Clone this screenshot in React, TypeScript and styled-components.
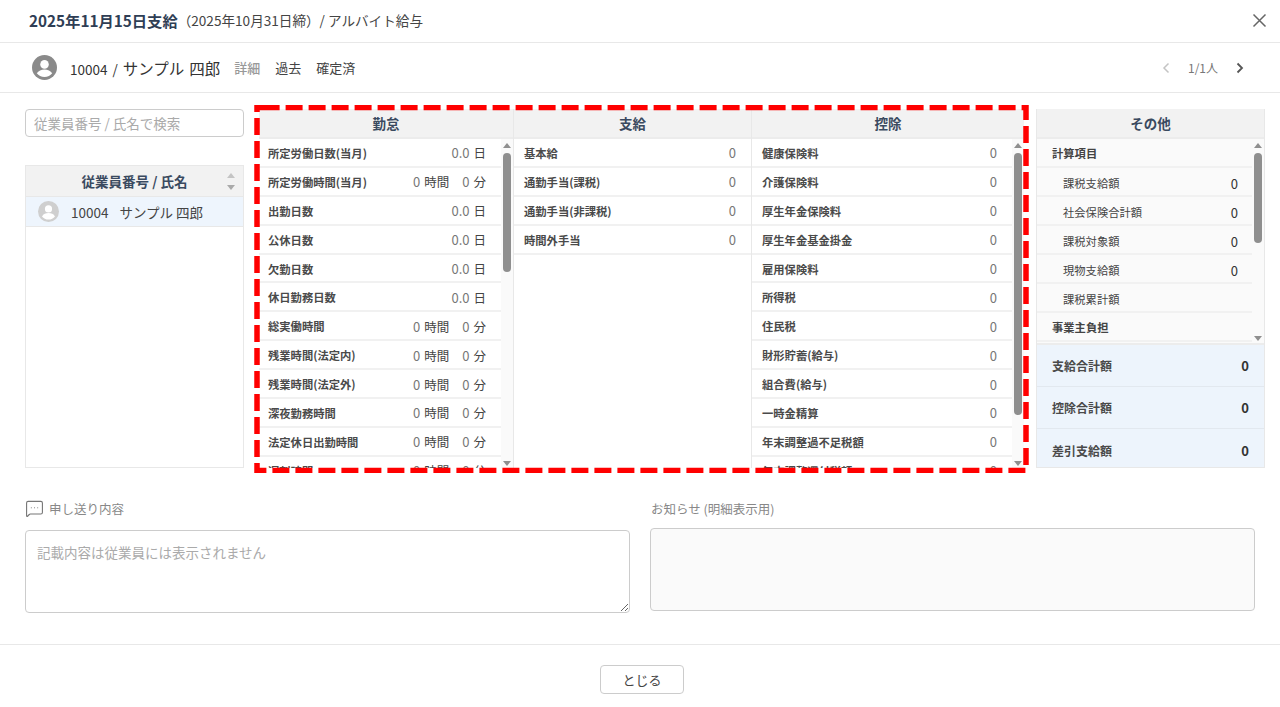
import React from "react";
import styled, { createGlobalStyle } from "styled-components";
import { MessageSquareMore } from "lucide-react";

const GlobalStyle = createGlobalStyle`
  html, body {
    margin: 0;
    padding: 0;
    background: #fff;
  }
  body {
    font-family: "Noto Sans CJK JP", "Noto Sans", sans-serif;
    color: #444;
  }
  * {
    box-sizing: border-box;
  }
`;

interface PayRow {
  label: string;
  days?: string;
  hours?: boolean;
  amount?: string;
}

const attendance: PayRow[] = [
  { label: "所定労働日数(当月)", days: "0.0" },
  { label: "所定労働時間(当月)", hours: true },
  { label: "出勤日数", days: "0.0" },
  { label: "公休日数", days: "0.0" },
  { label: "欠勤日数", days: "0.0" },
  { label: "休日勤務日数", days: "0.0" },
  { label: "総実働時間", hours: true },
  { label: "残業時間(法定内)", hours: true },
  { label: "残業時間(法定外)", hours: true },
  { label: "深夜勤務時間", hours: true },
  { label: "法定休日出勤時間", hours: true },
  { label: "遅刻時間", hours: true },
];

const payments: PayRow[] = [
  { label: "基本給", amount: "0" },
  { label: "通勤手当(課税)", amount: "0" },
  { label: "通勤手当(非課税)", amount: "0" },
  { label: "時間外手当", amount: "0" },
];

const deductions: PayRow[] = [
  { label: "健康保険料", amount: "0" },
  { label: "介護保険料", amount: "0" },
  { label: "厚生年金保険料", amount: "0" },
  { label: "厚生年金基金掛金", amount: "0" },
  { label: "雇用保険料", amount: "0" },
  { label: "所得税", amount: "0" },
  { label: "住民税", amount: "0" },
  { label: "財形貯蓄(給与)", amount: "0" },
  { label: "組合費(給与)", amount: "0" },
  { label: "一時金精算", amount: "0" },
  { label: "年末調整過不足税額", amount: "0" },
  { label: "年末調整還付税額", amount: "0" },
];

const others = [
  { label: "計算項目", heading: true },
  { label: "課税支給額", amount: "0" },
  { label: "社会保険合計額", amount: "0" },
  { label: "課税対象額", amount: "0" },
  { label: "現物支給額", amount: "0" },
  { label: "課税累計額" },
  { label: "事業主負担", heading: true },
];

const totals = ["支給合計額", "控除合計額", "差引支給額"];

const Avatar: React.FC<{ size: number; color: string }> = ({ size, color }) => (
  <svg width={size} height={size} viewBox="0 0 24 24" style={{ flexShrink: 0 }}>
    <circle cx="12" cy="12" r="12" fill={color} />
    <circle cx="12" cy="9" r="4.1" fill="#fff" />
    <path d="M4.6 17.6c1.5-2.6 4.4-3.8 7.4-3.8s5.900 1.200 7.400 3.800c-1.700 2.200-4.400 3.600-7.400 3.600s-5.700-1.400-7.400-3.600z" fill="#fff" />
  </svg>
);

const Rail: React.FC<{ thumb: number }> = ({ thumb }) => (
  <ScrollRail>
    <ArrowUp />
    <Thumb $height={thumb} />
    <RailSpacer />
    <ArrowDown />
  </ScrollRail>
);

const Rows: React.FC<{ rows: PayRow[]; inset: number }> = ({ rows, inset }) => (
  <RowList>
    {rows.map((row) => (
      <Row key={row.label} $inset={inset}>
        <RowLabel>{row.label}</RowLabel>
        {row.days && (
          <RowValue>
            <Num>{row.days}</Num>
            <Unit>日</Unit>
          </RowValue>
        )}
        {row.hours && (
          <RowValue>
            <Num>0</Num>
            <Unit>時間</Unit>
            <Num $gap>0</Num>
            <Unit>分</Unit>
          </RowValue>
        )}
        {row.amount && (
          <RowValue>
            <Num>{row.amount}</Num>
          </RowValue>
        )}
      </Row>
    ))}
  </RowList>
);

const App: React.FC = () => {
  return (
    <Page>
      <GlobalStyle />
      <TitleBar>
        <Title>2025年11月15日支給</Title>
        <SubTitle>（2025年10月31日締）/ アルバイト給与</SubTitle>
        <CloseIcon width="15" height="15" viewBox="0 0 15 15">
          <path d="M1.500 1.500l12 12M13.500 1.500l-12 12" stroke="#666" strokeWidth="1.500" fill="none" />
        </CloseIcon>
      </TitleBar>

      <EmployeeBar>
        <Avatar size={25} color="#8a8a8a" />
        <EmployeeName>
          <EmployeeCode>10004 /</EmployeeCode> サンプル 四郎
        </EmployeeName>
        <Tab $active>詳細</Tab>
        <Tab>過去</Tab>
        <Tab>確定済</Tab>
        <Pager>
          <svg width="9" height="12" viewBox="0 0 9 12">
            <path d="M6.500 1.500L2 6l4.500 4.500" stroke="#c4c4c4" strokeWidth="1.500" fill="none" />
          </svg>
          <PagerText>1/1人</PagerText>
          <svg width="9" height="12" viewBox="0 0 9 12">
            <path d="M2.500 1.500L7 6l-4.500 4.500" stroke="#555" strokeWidth="1.800" fill="none" />
          </svg>
        </Pager>
      </EmployeeBar>

      <Body>
        <Sidebar>
          <SearchInput placeholder="従業員番号 / 氏名で検索" />
          <EmployeeTable>
            <EmployeeHead>
              従業員番号 / 氏名
              <SortIcon>
                <ArrowUp $color="#c4c4c4" />
                <ArrowDown $color="#aaa" />
              </SortIcon>
            </EmployeeHead>
            <EmployeeRow>
              <Avatar size={21} color="#cfcfcf" />
              <span>10004</span>
              <span>サンプル 四郎</span>
            </EmployeeRow>
          </EmployeeTable>
        </Sidebar>

        <PayPanel>
          <PayColumn>
            <PanelHead>勤怠</PanelHead>
            <ColumnBody>
              <Rows rows={attendance} inset={9} />
              <Rail thumb={119} />
            </ColumnBody>
          </PayColumn>
          <PayColumn>
            <PanelHead>支給</PanelHead>
            <ColumnBody>
              <Rows rows={payments} inset={10} />
            </ColumnBody>
          </PayColumn>
          <PayColumn>
            <PanelHead>控除</PanelHead>
            <ColumnBody>
              <Rows rows={deductions} inset={10} />
              <Rail thumb={262} />
            </ColumnBody>
          </PayColumn>
          <Highlight width="775" height="368" viewBox="0 0 775 368">
            <path
              d="M8.600 2.500H772V365.500H3V2.500H8.600"
              fill="none"
              stroke="#f00"
              strokeWidth="5.500"
              strokeDasharray="17 6"
            />
          </Highlight>
        </PayPanel>

        <OtherPanel>
          <PanelHead>その他</PanelHead>
          <OtherScroll>
            <OtherList>
              {others.map((item) => (
                <OtherRow key={item.label} $heading={item.heading}>
                  <span>{item.label}</span>
                  {item.amount && <OtherValue>{item.amount}</OtherValue>}
                </OtherRow>
              ))}
            </OtherList>
            <Rail thumb={90} />
          </OtherScroll>
          <Totals>
            {totals.map((label) => (
              <TotalRow key={label}>
                <span>{label}</span>
                <TotalValue>0</TotalValue>
              </TotalRow>
            ))}
          </Totals>
        </OtherPanel>
      </Body>

      <Notes>
        <NoteBlock>
          <NoteLabel>
            <MessageSquareMore size={19} strokeWidth={1.400} color="#777" />
            申し送り内容
          </NoteLabel>
          <NoteArea placeholder="記載内容は従業員には表示されません" />
        </NoteBlock>
        <NoteBlock>
          <NoteLabel $plain>お知らせ (明細表示用)</NoteLabel>
          <NoteArea $readonly />
        </NoteBlock>
      </Notes>

      <Footer>
        <CloseButton>とじる</CloseButton>
      </Footer>
    </Page>
  );
};

const Page = styled.div`
  width: 1280px;
  height: 707px;
  display: flex;
  flex-direction: column;
  overflow: hidden;
`;

const TitleBar = styled.div`
  height: 43px;
  flex-shrink: 0;
  display: flex;
  align-items: center;
  padding: 0 13px 2px 29px;
  border-bottom: 1px solid #e8e8e8;
`;

const Title = styled.span`
  font-size: 15.3px;
  font-weight: 700;
  color: #2f3e55;
`;

const SubTitle = styled.span`
  font-size: 13.6px;
  color: #444;
`;

const CloseIcon = styled.svg`
  margin-left: auto;
`;

const EmployeeBar = styled.div`
  height: 50px;
  flex-shrink: 0;
  display: flex;
  align-items: center;
  padding: 0 36px 0 32px;
  border-bottom: 1px solid #e8e8e8;
`;

const EmployeeName = styled.span`
  font-size: 15.5px;
  word-spacing: 1.500px;
  color: #333;
  margin: 0 14px 0 13px;
  white-space: pre-wrap;
`;

const EmployeeCode = styled.span`
  font-size: 13.5px;
  word-spacing: 2px;
`;

const Tab = styled.span<{ $active?: boolean }>`
  font-size: 13px;
  margin-right: 15px;
  color: ${(props) => (props.$active ? "#999" : "#444")};
  font-weight: ${(props) => (props.$active ? 500 : 400)};
`;

const Pager = styled.div`
  margin-left: auto;
  display: flex;
  align-items: center;
  gap: 17px;
`;

const PagerText = styled.span`
  font-size: 12px;
  color: #777;
`;

const Body = styled.div`
  height: 375px;
  flex-shrink: 0;
  display: flex;
  padding: 16px 15px 0 25px;
`;

const Sidebar = styled.div`
  width: 219px;
  height: 359px;
  display: flex;
  flex-direction: column;
  gap: 28px;
  margin-right: 15px;
`;

const SearchInput = styled.input`
  height: 28px;
  padding: 0 8px;
  border: 1px solid #ccc;
  border-radius: 4px;
  font-family: inherit;
  font-size: 13.5px;
  outline: none;
  &::placeholder {
    color: #aaa;
  }
`;

const EmployeeTable = styled.div`
  flex: 1;
  border: 1px solid #e8e8e8;
`;

const EmployeeHead = styled.div`
  position: relative;
  height: 31px;
  display: flex;
  align-items: center;
  justify-content: center;
  background: #f2f2f2;
  border-bottom: 1px solid #e8e8e8;
  font-size: 13.5px;
  font-weight: 700;
  color: #3a4a60;
`;

const SortIcon = styled.div`
  position: absolute;
  right: 8px;
  top: 7px;
  display: flex;
  flex-direction: column;
  gap: 7px;
`;

const EmployeeRow = styled.div`
  height: 30px;
  display: flex;
  align-items: center;
  padding-left: 12px;
  background: #eef5fd;
  border-bottom: 1px solid #e8e8e8;
  font-size: 13.5px;
  color: #444;
  & > span:nth-of-type(1) {
    margin: 0 11px 0 12px;
  }
`;

const PayPanel = styled.div`
  position: relative;
  width: 765px;
  height: 359px;
  margin-right: 12px;
  display: grid;
  grid-template-columns: 254px 238px 273px;
  grid-template-rows: 359px;
`;

const Highlight = styled.svg`
  position: absolute;
  left: -5px;
  top: -4px;
  pointer-events: none;
`;

const PayColumn = styled.div`
  min-width: 0;
  min-height: 0;
  display: flex;
  flex-direction: column;
  & + & {
    border-left: 1px solid #e8e8e8;
  }
`;

const PanelHead = styled.div`
  height: 30px;
  flex-shrink: 0;
  display: flex;
  align-items: center;
  justify-content: center;
  background: #f2f2f2;
  border-bottom: 2px solid #ececec;
  font-size: 13.5px;
  font-weight: 700;
  color: #3a4a60;
`;

const ColumnBody = styled.div`
  flex: 1;
  min-height: 0;
  display: flex;
  overflow: hidden;
`;

const RowList = styled.div`
  flex: 1;
  min-width: 0;
`;

const Row = styled.div<{ $inset: number }>`
  height: 28.9px;
  display: flex;
  align-items: center;
  justify-content: space-between;
  padding: 1px 15px 0 ${(props) => props.$inset}px;
  border-bottom: 2px solid #f1f1f1;
`;

const RowLabel = styled.span`
  font-size: 11.3px;
  font-weight: 700;
  color: #4a4a4a;
`;

const RowValue = styled.span`
  display: flex;
  align-items: baseline;
  font-size: 13px;
`;

const Num = styled.span<{ $gap?: boolean }>`
  color: #777;
  margin-left: ${(props) => (props.$gap ? "13px" : "0")};
`;

const Unit = styled.span`
  color: #444;
  font-size: 12.5px;
  margin-left: 4px;
`;

const ScrollRail = styled.div`
  width: 12px;
  flex-shrink: 0;
  display: flex;
  flex-direction: column;
  align-items: center;
  padding: 4px 0 2px;
  background: #fafafa;
`;

const ArrowUp = styled.div<{ $color?: string }>`
  width: 0;
  height: 0;
  flex-shrink: 0;
  border-left: 4.500px solid transparent;
  border-right: 4.500px solid transparent;
  border-bottom: 5px solid ${(props) => props.$color || "#8f8f8f"};
`;

const ArrowDown = styled.div<{ $color?: string }>`
  width: 0;
  height: 0;
  flex-shrink: 0;
  border-left: 4.500px solid transparent;
  border-right: 4.500px solid transparent;
  border-top: 5px solid ${(props) => props.$color || "#8f8f8f"};
`;

const Thumb = styled.div<{ $height: number }>`
  width: 8px;
  height: ${(props) => props.$height}px;
  margin-top: 5px;
  flex-shrink: 0;
  border-radius: 4px;
  background: #8f8f8f;
`;

const RailSpacer = styled.div`
  flex: 1;
`;

const OtherPanel = styled.div`
  width: 229px;
  height: 359px;
  display: flex;
  flex-direction: column;
  overflow: hidden;
  border: 1px solid #e8e8e8;
  border-top: 0;
`;

const OtherScroll = styled.div`
  height: 206px;
  flex-shrink: 0;
  display: flex;
  background: #fafafa;
  border-bottom: 2px solid #ececec;
`;

const OtherList = styled.div`
  flex: 1;
  overflow: hidden;
`;

const OtherRow = styled.div<{ $heading?: boolean }>`
  height: 29px;
  display: flex;
  align-items: center;
  justify-content: space-between;
  padding: ${(props) => (props.$heading ? "0" : "3px")} 14px 0 ${(props) => (props.$heading ? "15px" : "26px")};
  border-bottom: 2px solid #f1f1f1;
  font-size: 11.3px;
  font-weight: ${(props) => (props.$heading ? 700 : 400)};
  color: #444;
`;

const OtherValue = styled.span`
  font-size: 13px;
  color: #333;
`;

const Totals = styled.div`
  display: grid;
  grid-template-rows: repeat(3, 42px);
  background: #edf4fc;
`;

const TotalRow = styled.div`
  display: flex;
  align-items: center;
  justify-content: space-between;
  padding: 0 15px;
  border-bottom: 1px solid #e2e8ef;
  font-size: 12px;
  font-weight: 700;
  color: #4a4a4a;
  &:last-child {
    border-bottom: 0;
  }
`;

const TotalValue = styled.span`
  font-size: 13px;
  font-weight: 700;
  color: #333;
`;

const Notes = styled.div`
  height: 177px;
  flex-shrink: 0;
  display: flex;
  gap: 20px;
  padding: 30px 25px 0;
  border-bottom: 1px solid #e8e8e8;
`;

const NoteBlock = styled.div`
  width: 605px;
`;

const NoteLabel = styled.div<{ $plain?: boolean }>`
  height: 21px;
  display: flex;
  align-items: center;
  gap: 5px;
  margin-bottom: ${(props) => (props.$plain ? "9px" : "11px")};
  padding-left: ${(props) => (props.$plain ? "1px" : "0")};
  font-size: 12.5px;
  color: #888;
`;

const NoteArea = styled.textarea<{ $readonly?: boolean }>`
  display: block;
  width: 605px;
  height: 83px;
  padding: 11px;
  border: 1px solid #ccc;
  border-radius: 4px;
  font-family: inherit;
  font-size: 13.5px;
  outline: none;
  background: ${(props) => (props.$readonly ? "#fafafa" : "#fff")};
  resize: ${(props) => (props.$readonly ? "none" : "both")};
  &::placeholder {
    color: #aaa;
  }
`;

const Footer = styled.div`
  flex: 1;
  display: flex;
  justify-content: center;
  padding: 20px 0 0 4px;
`;

const CloseButton = styled.button`
  width: 84px;
  height: 29px;
  background: #fff;
  border: 1px solid #ccc;
  border-radius: 4px;
  font-family: inherit;
  font-size: 13px;
  color: #444;
`;

export default App;
